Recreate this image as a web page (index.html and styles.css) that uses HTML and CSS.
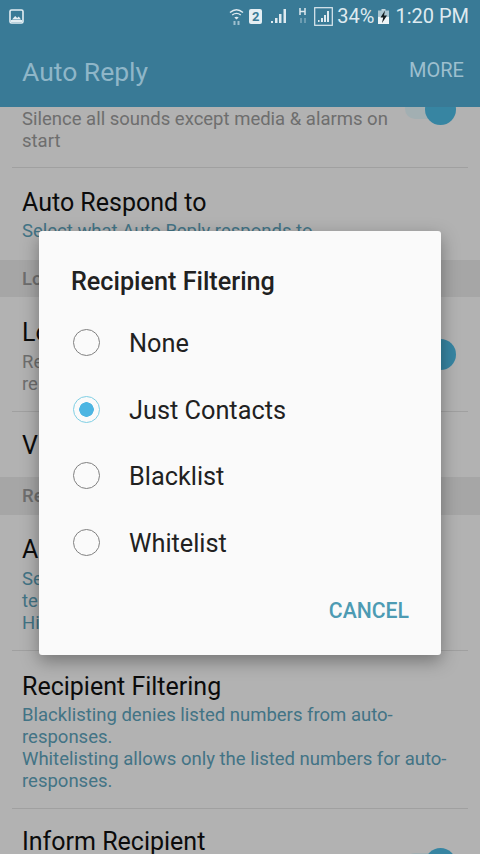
FILE: index.html
```html
<!DOCTYPE html>
<html>
<head>
<meta charset="utf-8">
<title>Auto Reply</title>
<link rel="stylesheet" href="styles.css">
</head>
<body>
<div class="screen">
  <div class="statusbar">
    <svg width="15" height="15" viewBox="0 0 15 15"><rect x="1" y="1" width="13" height="13" rx="1.5" fill="none" stroke="#e4eef3" stroke-width="1.6"/><path d="M3 10.5 6.2 7l2 2 1.6-1.4 2.2 2.9z" fill="#e4eef3"/><rect x="2" y="11" width="11" height="2" fill="#e4eef3"/></svg>
    <div class="status-right">
      <svg width="15" height="18" viewBox="0 0 15 18"><path d="M1 5.5C5 2 10 2 14 5.5" fill="none" stroke="#dfeaf0" stroke-width="1.4"/><path d="M3.2 8C5.8 6 9.2 6 11.8 8" fill="none" stroke="#dfeaf0" stroke-width="1.4"/><path d="M5.3 10.4C6.5 9.5 8.5 9.5 9.7 10.4L7.5 12.5z" fill="#dfeaf0"/><rect x="4.5" y="14" width="2" height="4" fill="#9fc0cf"/><rect x="8.5" y="14" width="2" height="4" fill="#9fc0cf"/></svg>
      <span class="sim">2</span>
      <svg class="gap-a" width="16" height="16" viewBox="0 0 16 16"><rect x="0" y="13" width="2" height="2" fill="#dfeaf0"/><rect x="4" y="10" width="2.5" height="5" fill="#dfeaf0"/><rect x="8" y="6" width="2.5" height="9" fill="#dfeaf0"/><rect x="12.5" y="1" width="2.5" height="14" fill="#dfeaf0"/></svg>
      <svg class="gap-b" width="8" height="18" viewBox="0 0 8 18"><path d="M1 1v7M6 1v7M1 4.5h5" stroke="#dfeaf0" stroke-width="1.5" fill="none"/><path d="M2 11v5M6 11v5" stroke="#7fa9bc" stroke-width="1.5" fill="none"/></svg>
      <svg class="gap-c" width="19" height="19" viewBox="0 0 19 19"><rect x=".7" y=".7" width="17.6" height="17.6" fill="none" stroke="#dfeaf0" stroke-width="1.2"/><rect x="4" y="13" width="1.5" height="2" fill="#dfeaf0"/><rect x="7" y="11" width="2" height="4" fill="#dfeaf0"/><rect x="10" y="8" width="2" height="7" fill="#dfeaf0"/><rect x="13" y="4" width="2" height="11" fill="#dfeaf0"/></svg>
      <span class="pct">34%</span>
      <svg class="batt" width="11" height="15" viewBox="0 0 11 15"><rect x="3.5" y="0" width="4" height="2" fill="#c4d6de"/><rect x="0" y="1.5" width="11" height="6" fill="#a9c4d0"/><rect x="0" y="7.5" width="11" height="7.5" fill="#eef4f7"/><path d="M7 1.5 2.5 8.5h2.7L4 14l5-7.5H6z" fill="#111a1e"/></svg>
      <span class="clock">1:20 PM</span>
    </div>
  </div>
  <div class="appbar">
    <span class="app-title">Auto Reply</span>
    <span class="app-more">MORE</span>
  </div>

  <div class="list">
    <div class="row row-first">
      <div class="row-text">
        <div class="sub sub-grey">Silence all sounds except media &amp; alarms on start</div>
      </div>
      <div class="toggle toggle-top"></div>
    </div>
    <div class="row row-two">
      <div class="row-text">
        <div class="name">Auto Respond to</div>
        <div class="sub sub-blue">Select what Auto Reply responds to</div>
      </div>
    </div>
    <div class="section">Lo</div>
    <div class="row row-loc">
      <div class="row-text">
        <div class="name">Lo</div>
        <div class="sub sub-grey">Re<br>re</div>
      </div>
      <div class="toggle"></div>
    </div>
    <div class="row row-v">
      <div class="row-text"><div class="name">Vi</div></div>
    </div>
    <div class="section section-re">Re</div>
    <div class="row row-a">
      <div class="row-text">
        <div class="name">Au</div>
        <div class="sub sub-blue">Se<br>te<br>Hi</div>
      </div>
    </div>
    <div class="row row-rf">
      <div class="row-text">
        <div class="name">Recipient Filtering</div>
        <div class="sub sub-blue">Blacklisting denies listed numbers from auto-responses.<br>Whitelisting allows only the listed numbers for auto-responses.</div>
      </div>
    </div>
    <div class="row row-last">
      <div class="row-text"><div class="name">Inform Recipient</div></div>
      <div class="toggle toggle-low"></div>
    </div>
  </div>

  <div class="overlay"></div>
  <div class="dialog">
    <div class="dialog-title">Recipient Filtering</div>
    <div class="option"><span class="radio"></span><span>None</span></div>
    <div class="option"><span class="radio radio-on"></span><span>Just Contacts</span></div>
    <div class="option"><span class="radio"></span><span>Blacklist</span></div>
    <div class="option"><span class="radio"></span><span>Whitelist</span></div>
    <div class="dialog-actions"><span class="cancel">CANCEL</span></div>
  </div>
</div>
</body>
</html>
```

FILE: styles.css
```css
* {
  box-sizing: border-box;
  margin: 0;
  padding: 0;
}

html, body {
  width: 480px;
  height: 854px;
  overflow: hidden;
}

body {
  font-family: Roboto, "Noto Sans", sans-serif;
  background: #fff;
}

.screen {
  position: relative;
  width: 480px;
  height: 854px;
  overflow: hidden;
  display: flex;
  flex-direction: column;
}

/* status + app bar */
.statusbar {
  height: 32px;
  flex: none;
  background: #397a96;
  display: flex;
  align-items: center;
  justify-content: space-between;
  padding: 0 11px 0 9px;
  position: relative;
  z-index: 3;
}

.status-right {
  display: flex;
  align-items: center;
  color: #dfeaf0;
}

.sim {
  width: 13px;
  height: 15px;
  margin-left: 5px;
  background: #e4eef3;
  color: #397a96;
  border-radius: 2px;
  font-size: 13px;
  font-weight: 700;
  line-height: 15px;
  text-align: center;
}

.gap-a { margin-left: 9px; }
.gap-b { margin-left: 12px; }
.gap-c { margin-left: 7px; }

.pct {
  font-size: 20px;
  margin-left: 4px;
}

.batt { margin-left: 4px; }

.clock {
  font-size: 20px;
  margin-left: 6px;
}

.appbar {
  height: 75px;
  flex: none;
  background: #397a96;
  display: flex;
  align-items: center;
  justify-content: space-between;
  padding: 3px 16px 0 22px;
  position: relative;
  z-index: 3;
}

.app-title {
  font-size: 26.5px;
  color: #8fb6c8;
  margin-top: 1px;
}

.app-more {
  font-size: 20px;
  color: #9dbfce;
  margin-bottom: 2px;
}

/* settings list under the dim */
.list {
  flex: 1;
  background: #fff;
  overflow: hidden;
}

.row {
  margin: 0 12px;
  padding: 0 10px;
  display: flex;
  border-bottom: 1px solid #e6e6e6;
}

.row-text { flex: 1; }

.name {
  font-size: 25px;
  line-height: 30px;
  color: #111;
  margin-bottom: 3px;
}

.sub {
  font-size: 18.5px;
  line-height: 22px;
}

.sub-grey { color: #9e9e9e; }
.sub-blue { color: #5fa6bf; }

.row-first {
  height: 61px;
  padding-top: 1px;
}

.row-two {
  height: 92px;
  padding-top: 20px;
  border-bottom: 0;
}

.row-two .name { margin-bottom: 2px; }

.section {
  height: 37px;
  background: #eeeeee;
  padding-left: 22px;
  font-size: 18.5px;
  line-height: 39px;
  color: #9e9e9e;
  font-weight: 500;
}

.row-loc {
  height: 115px;
  padding-top: 21px;
}

.row-v {
  height: 65px;
  padding-top: 19px;
  border-bottom: 0;
}

.section-re {
  height: 38px;
}

.row-a {
  height: 136px;
  padding-top: 20px;
}

.row-rf {
  height: 158px;
  padding-top: 21px;
}

.row-rf .name { margin-bottom: 2px; }

.row-last {
  padding-top: 21px;
  border-bottom: 0;
}

.row-last .name {
  line-height: 24px;
  margin-bottom: 0;
}

.toggle {
  position: relative;
  width: 51px;
  height: 31px;
  margin: 21px 2px 0 0;
  flex: none;
}

.toggle::before {
  content: "";
  position: absolute;
  left: 0;
  right: 12px;
  top: 5px;
  height: 20px;
  border-radius: 10px;
  background: #e9fbff;
}

.toggle::after {
  content: "";
  position: absolute;
  right: 0;
  top: 0;
  width: 31px;
  height: 31px;
  border-radius: 50%;
  background: #4fbfe9;
}

.toggle-top { margin-top: -14px; }
.toggle-low { margin-top: 18px; }

/* dim + dialog */
.overlay {
  position: absolute;
  inset: 0;
  background: rgba(0, 0, 0, 0.3);
  z-index: 1;
}

.dialog {
  position: absolute;
  left: 39px;
  top: 231px;
  width: 402px;
  height: 424px;
  background: #fafafa;
  border-radius: 3px;
  box-shadow: 0 6px 18px rgba(0, 0, 0, 0.35);
  z-index: 2;
  padding: 33px 32px 0 32px;
}

.dialog-title {
  font-size: 25.2px;
  font-weight: 500;
  line-height: 36px;
  color: #212121;
  margin-bottom: 10px;
}

.option {
  height: 66.8px;
  display: flex;
  align-items: center;
  gap: 29px;
  font-size: 25.3px;
  color: #212121;
  margin-left: 2px;
}

.radio {
  width: 27px;
  height: 27px;
  border-radius: 50%;
  border: 1.5px solid #808080;
  background: #fafafa;
  flex: none;
  margin-top: -2px;
}

.radio-on {
  border-color: #7fcfe4;
  background: radial-gradient(circle, #4cb5e2 0, #4cb5e2 7px, #fafafa 7.5px);
}

.dialog-actions {
  display: flex;
  justify-content: flex-end;
  margin-top: 21px;
}

.cancel {
  font-size: 21.2px;
  font-weight: 500;
  color: #4d9bb3;
}
```
